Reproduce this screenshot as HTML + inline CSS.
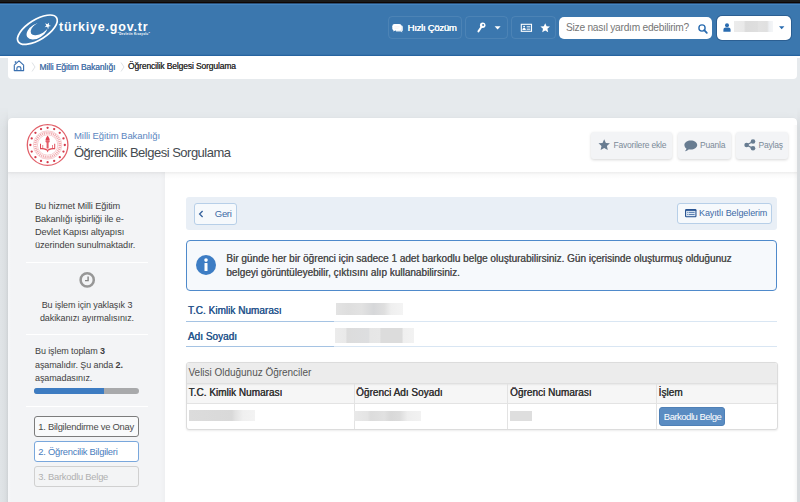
<!DOCTYPE html>
<html><head><meta charset="utf-8">
<style>
*{margin:0;padding:0;box-sizing:border-box}
html,body{width:800px;height:502px;overflow:hidden;background:#e6eaed;font-family:"Liberation Sans",sans-serif;position:relative}
.a{position:absolute}
.t{position:absolute;white-space:nowrap;line-height:1}
.sb{text-shadow:0.25px 0 0 currentColor}
svg{position:absolute;overflow:visible}
</style></head><body>
<!-- top dark bar -->
<div class="a" style="left:0;top:0;width:800px;height:2px;background:#1a1b1b"></div>
<div class="a" style="left:0;top:2px;width:800px;height:1px;background:#0e0604"></div>
<!-- header -->
<div class="a" style="left:0;top:3px;width:800px;height:53px;background:#3b77ae"></div>
<div class="a" style="left:0;top:3px;width:800px;height:1px;background:#2b4f74"></div>
<div class="a" style="left:0;top:4px;width:800px;height:1px;background:#4484c1"></div>
<div class="a" style="left:0;top:54px;width:800px;height:1px;background:#3672aa"></div>
<div class="a" style="left:0;top:55px;width:800px;height:1px;background:#2764a0"></div>
<div class="a" style="left:0;top:56px;width:800px;height:2px;background:#fff"></div>


<!-- logo -->
<svg style="left:0;top:0" width="160" height="56" viewBox="0 0 160 56">
  <defs>
    <mask id="cres" maskUnits="userSpaceOnUse" x="-50" y="-50" width="100" height="100">
      <rect x="-50" y="-50" width="100" height="100" fill="#fff"/>
      <ellipse cx="4.2" cy="-1" rx="10.6" ry="5.6" fill="#000"/>
    </mask>
  </defs>
  <ellipse cx="37.4" cy="29.7" rx="22.6" ry="10" transform="rotate(-32 37.4 29.7)" fill="none" stroke="#fff" stroke-width="1.7"/>
  <g transform="translate(37 31) rotate(-32)">
    <ellipse cx="0" cy="0" rx="11.5" ry="7" fill="#fff" mask="url(#cres)"/>
  </g>
  <polygon points="47.8,21.6 48.8,24.2 51.6,24.2 49.3,25.9 50.2,28.6 47.8,27 45.4,28.6 46.3,25.9 44,24.2 46.8,24.2" fill="#fff" transform="translate(47.8 25.3) scale(0.85) rotate(25) translate(-47.8 -25)"/>
</svg>
<div class="t" style="left:59px;top:21.4px;font-size:12.5px;font-weight:700;color:#fff;letter-spacing:0.8px">türkiye.gov.tr</div>
<div class="t" style="left:117.5px;top:33.4px;font-size:3px;font-weight:700;color:#fff;letter-spacing:0.25px">"Devletin Kısayolu"</div>

<!-- Hizli cozum button -->
<div class="a" style="left:387.5px;top:15.5px;width:74.5px;height:23.5px;border:1px solid rgba(255,255,255,0.09);border-radius:4px"></div>
<svg style="left:392px;top:23px" width="12" height="10" viewBox="0 0 12 10">
  <path d="M4 2.6 H9.4 C10.3 2.6 10.9 3.2 10.9 4.1 V6.9 C10.9 7.7 10.4 8.2 9.8 8.3 L10.4 9.5 L8.6 8.4 H4 Z" fill="#fff" opacity="0.85"/>
  <rect x="0.3" y="1" width="9.2" height="6.4" rx="2.2" fill="#fff"/>
  <path d="M1.6 6.8 L1.3 8.6 L3.6 7.2 Z" fill="#fff"/>
  <rect x="2.4" y="3.6" width="5.2" height="0.6" fill="#e6d9d9" opacity="0.6"/>
  <rect x="2.4" y="5.1" width="4" height="0.5" fill="#e6e6d9" opacity="0.5"/>
</svg>
<div class="t" style="left:407.5px;top:22.6px;font-size:9.6px;font-weight:400;color:#fff;letter-spacing:-0.3px;text-shadow:0.35px 0 0 #fff">Hızlı Çözüm</div>

<!-- key button -->
<div class="a" style="left:465px;top:16px;width:42.5px;height:23px;border:1px solid rgba(255,255,255,0.09);border-radius:4px"></div>
<svg style="left:472px;top:19px" width="16" height="16" viewBox="472 19 16 16">
  <path d="M481.2 27.2 L478.4 31.4" stroke="#fff" stroke-width="1.9" stroke-linecap="round"/>
  <circle cx="482.7" cy="25.3" r="2.75" fill="#fff"/>
  <circle cx="483.1" cy="25" r="0.95" fill="#3b77ae"/>
</svg>
<svg style="left:494px;top:25.5px" width="8" height="4" viewBox="0 0 8 4"><path d="M0.6 0.3 H6.6 L3.6 3.5 Z" fill="#fff"/></svg>

<!-- id card / star button -->
<div class="a" style="left:511px;top:16px;width:45px;height:23px;border:1px solid rgba(255,255,255,0.09);border-radius:4px"></div>
<svg style="left:516px;top:19px" width="20" height="16" viewBox="516 19 20 16">
  <rect x="521.3" y="24.3" width="10.2" height="7" fill="none" stroke="#fff" stroke-width="1.1"/>
  <circle cx="524.1" cy="26.6" r="0.95" fill="#fff"/>
  <path d="M522.4 29.9 C522.4 28.6 523.1 28.1 524.1 28.1 C525.1 28.1 525.8 28.6 525.8 29.9 Z" fill="#fff"/>
  <rect x="526.7" y="26.1" width="3.6" height="0.8" fill="#fff" opacity="0.85"/>
  <rect x="526.7" y="27.6" width="3.6" height="0.8" fill="#fff" opacity="0.85"/>
  <rect x="526.7" y="29.1" width="3.6" height="0.8" fill="#fff" opacity="0.85"/>
</svg>
<svg style="left:540px;top:23px" width="11" height="10" viewBox="0 0 11 10">
  <polygon points="5.2,0.2 6.6,3.3 10,3.6 7.4,5.8 8.2,9.3 5.2,7.4 2.2,9.3 3,5.8 0.4,3.6 3.8,3.3" fill="#fff"/>
</svg>

<!-- search -->
<div class="a" style="left:558.5px;top:16.5px;width:153.5px;height:22.5px;background:#fff;border-radius:5px"></div>
<div class="t" style="left:566px;top:22.5px;font-size:10.2px;color:#767676;letter-spacing:-0.25px">Size nasıl yardım edebilirim?</div>
<svg style="left:697.5px;top:23.5px" width="10" height="10" viewBox="0 0 10 10">
  <circle cx="4" cy="4" r="3.1" fill="none" stroke="#2a6cb0" stroke-width="1.4"/>
  <path d="M6.2 6.2 L8.8 8.8" stroke="#2a6cb0" stroke-width="1.8" stroke-linecap="round"/>
</svg>

<!-- user dropdown -->
<div class="a" style="left:715.5px;top:14.5px;width:76.5px;height:26px;background:#2c5f92;border-radius:6px"></div>
<div class="a" style="left:716.5px;top:15.5px;width:74.5px;height:24px;background:#fff;border-radius:5px"></div>
<svg style="left:722.5px;top:22.5px" width="8" height="9" viewBox="0 0 8 9">
  <circle cx="4" cy="2.2" r="2" fill="#2a6cb0"/>
  <path d="M0.4 8.8 L0.4 6.8 C0.4 5.3 1.6 4.5 2.6 4.5 L5.4 4.5 C6.4 4.5 7.6 5.3 7.6 6.8 L7.6 8.8 Z" fill="#2a6cb0"/>
</svg>
<div class="a" style="left:734px;top:21px;width:39px;height:11px;background:linear-gradient(90deg,#ececec 0%,#e9e9e9 25%,#dcdcdc 30%,#dedede 60%,#e2e2e2 62%,#e0e0e0 85%,#eef0f3 90%,#f4f6f8 100%)"></div>
<svg style="left:778.5px;top:25.5px" width="6" height="4" viewBox="0 0 6 4"><path d="M0 0.2 H5.4 L2.7 3.3 Z" fill="#2a6cb0"/></svg>

<!-- breadcrumb card -->
<div class="a" style="left:8px;top:56px;width:789px;height:23px;background:#fff;border-radius:0 0 4px 4px"></div>


<!-- breadcrumb content -->
<svg style="left:13px;top:59px" width="13" height="13" viewBox="13 59 13 13">
  <path d="M14 65.4 L19 60.8 L23.9 65.4 M14.3 65 V70.6 H23.6 V65 M16.9 70.6 V68 C16.9 66.2 20.9 66.2 20.9 68 V70.6" fill="none" stroke="#3a70b0" stroke-width="1.15" stroke-linejoin="round"/>
  <path d="M14.8 61.3 V63.6 L16.4 62.2 V61.3 Z" fill="#3a70b0"/>
</svg>
<svg style="left:31px;top:62px" width="6" height="11" viewBox="0 0 6 11"><path d="M1 0.5 L4 5 L1 9.5" fill="none" stroke="#d5d9de" stroke-width="0.8"/></svg>
<div class="t" style="left:39.5px;top:62.5px;font-size:8.5px;color:#4b76ab;letter-spacing:-0.12px;text-shadow:0.1px 0 0 #4b76ab">Milli Eğitim Bakanlığı</div>
<svg style="left:120px;top:62px" width="6" height="11" viewBox="0 0 6 11"><path d="M1 0.5 L4 5 L1 9.5" fill="none" stroke="#d5d9de" stroke-width="0.8"/></svg>
<div class="t" style="left:128px;top:62.3px;font-size:8.5px;color:#333;letter-spacing:-0.13px;text-shadow:0.1px 0 0 #333">Öğrencilik Belgesi Sorgulama</div>

<!-- main card -->
<div class="a" style="left:0;top:108px;width:8px;height:394px;background:linear-gradient(90deg,#e0e4e7 0%,#dde1e4 60%,#d5d9dc 100%);-webkit-mask-image:linear-gradient(transparent,#000 22px)"></div>
<div class="a" style="left:797px;top:108px;width:3px;height:394px;background:linear-gradient(90deg,#e2e5e8 0%,#dadee1 40%,#d9dde0 100%);-webkit-mask-image:linear-gradient(transparent,#000 22px)"></div>
<div class="a" style="left:8px;top:118px;width:789px;height:400px;background:#fff;border-radius:4px;box-shadow:0 0 1px rgba(0,0,0,0.1),0 0 9px rgba(0,0,0,0.04)"></div>

<!-- emblem -->
<svg style="left:0;top:0" width="100" height="200" viewBox="0 0 100 200">
  <circle cx="47.6" cy="145" r="20.3" fill="none" stroke="#e2626b" stroke-width="1.3"/>
  <circle cx="47.60" cy="127.80" r="1.15" fill="#d4394a"/><circle cx="54.18" cy="129.11" r="1.15" fill="#d4394a"/><circle cx="59.76" cy="132.84" r="1.15" fill="#d4394a"/><circle cx="63.49" cy="138.42" r="1.15" fill="#d4394a"/><circle cx="64.80" cy="145.00" r="1.15" fill="#d4394a"/><circle cx="63.49" cy="151.58" r="1.15" fill="#d4394a"/><circle cx="59.76" cy="157.16" r="1.15" fill="#d4394a"/><circle cx="54.18" cy="160.89" r="1.15" fill="#d4394a"/><circle cx="47.60" cy="162.20" r="1.15" fill="#d4394a"/><circle cx="41.02" cy="160.89" r="1.15" fill="#d4394a"/><circle cx="35.44" cy="157.16" r="1.15" fill="#d4394a"/><circle cx="31.71" cy="151.58" r="1.15" fill="#d4394a"/><circle cx="30.40" cy="145.00" r="1.15" fill="#d4394a"/><circle cx="31.71" cy="138.42" r="1.15" fill="#d4394a"/><circle cx="35.44" cy="132.84" r="1.15" fill="#d4394a"/><circle cx="41.02" cy="129.11" r="1.15" fill="#d4394a"/>
  <circle cx="47.6" cy="145" r="12.2" fill="none" stroke="#f0a9ae" stroke-width="2.6" stroke-dasharray="1.1 0.8"/>
  <circle cx="47.6" cy="145" r="14.2" fill="none" stroke="#eea0a5" stroke-width="0.5"/>
  <circle cx="47.6" cy="145" r="10.2" fill="none" stroke="#eea0a5" stroke-width="0.5"/>
  <path d="M47.6 135.6 C46.2 137.6 45.3 139.2 45.6 140.8 L49.6 140.8 C49.9 139.2 49 137.6 47.6 135.6 Z" fill="#e0404f"/>
  <path d="M45.3 141 L49.9 141 L49.2 142.6 L48.6 142.6 L48.6 148.6 L46.6 148.6 L46.6 142.6 L46 142.6 Z" fill="#e35d68"/>
  <path d="M40 143.8 L40 149.2 C42.5 149.2 45.5 149.6 47.6 151 C49.7 149.6 52.7 149.2 55.2 149.2 L55.2 143.8 L54.2 143.8 L54.2 148.1 C52 148.1 49.6 148.5 47.6 149.7 C45.6 148.5 43.2 148.1 41 148.1 L41 143.8 Z" fill="#e04a57"/>
  <rect x="42.3" y="145" width="0.9" height="3" fill="#e77a83"/>
  <rect x="52" y="145" width="0.9" height="3" fill="#e77a83"/>
  <rect x="47.1" y="150.5" width="1" height="1.6" fill="#e25863"/>
</svg>
<div class="t" style="left:74px;top:131.3px;font-size:9.5px;color:#5b86c0;letter-spacing:-0.07px">Milli Eğitim Bakanlığı</div>
<div class="t" style="left:74px;top:145.5px;font-size:13px;color:#444a50;letter-spacing:-0.5px">Öğrencilik Belgesi Sorgulama</div>

<!-- header action buttons -->
<div class="a" style="left:590.5px;top:131.5px;width:81.5px;height:27px;background:#f3f4f6;border-radius:3px;box-shadow:0 1px 3px rgba(0,0,0,0.16)"></div>
<svg style="left:598px;top:139px" width="13" height="12" viewBox="0 0 13 12">
  <polygon points="6.2,0.3 7.9,4 11.9,4.3 8.9,7 9.8,11 6.2,8.9 2.6,11 3.5,7 0.5,4.3 4.5,4" fill="#687c91"/>
</svg>
<div class="t" style="left:613.5px;top:140.5px;font-size:8.5px;color:#7b8a98;letter-spacing:-0.2px">Favorilere ekle</div>

<div class="a" style="left:677.5px;top:131.5px;width:53px;height:27px;background:#f3f4f6;border-radius:3px;box-shadow:0 1px 3px rgba(0,0,0,0.16)"></div>
<svg style="left:684px;top:140px" width="14" height="12" viewBox="0 0 14 12">
  <path d="M6.8 0.5 C10.3 0.5 13.2 2.5 13.2 5 C13.2 7.5 10.3 9.5 6.8 9.5 C6.1 9.5 5.5 9.4 4.9 9.3 C3.9 10.3 2.5 11 0.9 11.3 C1.7 10.6 2.3 9.6 2.4 8.6 C1.2 7.8 0.4 6.5 0.4 5 C0.4 2.5 3.3 0.5 6.8 0.5 Z" fill="#687c91"/>
</svg>
<div class="t" style="left:700px;top:140.5px;font-size:8.5px;color:#7b8a98;letter-spacing:-0.2px">Puanla</div>

<div class="a" style="left:736px;top:131.5px;width:52px;height:27px;background:#f3f4f6;border-radius:3px;box-shadow:0 1px 3px rgba(0,0,0,0.16)"></div>
<svg style="left:744px;top:139px" width="12" height="12" viewBox="0 0 12 12">
  <circle cx="2.6" cy="6" r="2.3" fill="#687c91"/>
  <circle cx="9" cy="2.5" r="2.3" fill="#687c91"/>
  <circle cx="9" cy="9.3" r="2.3" fill="#687c91"/>
  <path d="M2.6 6 L9 2.5 M2.6 6 L9 9.3" stroke="#687c91" stroke-width="1.3"/>
</svg>
<div class="t" style="left:758.5px;top:140.5px;font-size:8.5px;color:#7b8a98;letter-spacing:-0.2px">Paylaş</div>

<!-- sidebar -->

<div class="a" style="left:8px;top:172px;width:157px;height:340px;background:#f3f4f6"></div>
<div class="a" style="left:8px;top:172px;width:3px;height:330px;background:linear-gradient(90deg,#f7f8fa,#f3f4f6)"></div>
<div class="a" style="left:160px;top:172px;width:5px;height:330px;background:linear-gradient(90deg,rgba(0,0,0,0),rgba(0,0,0,0.018))"></div>
<div class="a" style="left:8px;top:171.5px;width:789px;height:7px;background:linear-gradient(rgba(0,0,0,0.07),rgba(0,0,0,0.02) 40%,rgba(0,0,0,0))"></div>


<!-- sidebar content -->
<div class="a" style="left:35px;top:199.9px;width:125px;font-size:9.2px;line-height:13px;letter-spacing:-0.1px;color:#3f3f3f;white-space:nowrap">Bu hizmet Milli Eğitim<br>Bakanlığı işbirliği ile e-<br>Devlet Kapısı altyapısı<br>üzerinden sunulmaktadır.</div>
<div class="a" style="left:26px;top:262px;width:122px;height:1px;background:#fff"></div>
<svg style="left:78px;top:271px" width="18" height="18" viewBox="0 0 18 18">
  <circle cx="9.2" cy="8.9" r="6.6" fill="none" stroke="#979797" stroke-width="2.5"/>
  <path d="M10.1 5.4 V9.6 H7" fill="none" stroke="#858585" stroke-width="1.4"/>
</svg>
<div class="a" style="left:26px;top:298.6px;width:122px;font-size:9px;line-height:13px;color:#3f3f3f;white-space:nowrap;text-align:center;letter-spacing:-0.1px">Bu işlem için yaklaşık 3<br>dakikanızı ayırmalısınız.</div>
<div class="a" style="left:26px;top:334px;width:122px;height:1px;background:#fff"></div>
<div class="a" style="left:35px;top:345px;width:125px;font-size:9px;line-height:13.5px;color:#3f3f3f;white-space:nowrap;letter-spacing:-0.1px">Bu işlem toplam <b>3</b><br>aşamalıdır. Şu anda <b>2.</b><br>aşamadasınız.</div>
<div class="a" style="left:34.3px;top:387.7px;width:104.7px;height:6px;background:#a8a9ab;border-radius:3px;overflow:hidden"><div style="width:70px;height:6px;background:#3d7cc2"></div></div>
<div class="a" style="left:26px;top:406px;width:122px;height:1px;background:#fff"></div>
<div class="a" style="left:34px;top:415.8px;width:105px;height:21px;border:1.5px solid #7c7c7c;border-radius:3px;background:#f9fafb"></div>
<div class="t" style="left:38.3px;top:421.9px;font-size:9.4px;color:#4a4a4a;letter-spacing:-0.25px">1. Bilgilendirme ve Onay</div>
<div class="a" style="left:34px;top:441px;width:105px;height:21px;border:1.5px solid #79a7dc;border-radius:3px;background:#fff"></div>
<div class="t" style="left:38.3px;top:447.1px;font-size:9.4px;color:#4a7dbd;letter-spacing:-0.25px">2. Öğrencilik Bilgileri</div>
<div class="a" style="left:34px;top:466.2px;width:105px;height:21px;border:1.5px solid #d0d0d0;border-radius:3px;background:#f3f4f5"></div>
<div class="t" style="left:38.3px;top:472.3px;font-size:9.4px;color:#b0b0b0;letter-spacing:-0.25px">3. Barkodlu Belge</div>

<!-- content -->
<div class="a" style="left:186px;top:197.3px;width:591.3px;height:32.5px;background:#e9eff6;border-radius:3px"></div>
<div class="a" style="left:193.6px;top:202.9px;width:43.2px;height:21.7px;border:1px solid #b7cfe8;border-radius:3px;background:#f6f9fc"></div>
<svg style="left:198px;top:210px" width="7" height="8" viewBox="0 0 7 8"><path d="M4.6 1 L1.6 4 L4.6 7" fill="none" stroke="#35619c" stroke-width="1.3"/></svg>
<div class="t" style="left:214.8px;top:208.7px;font-size:9.5px;color:#3d6aa5;letter-spacing:-0.3px">Geri</div>
<div class="a" style="left:677.2px;top:203.4px;width:94.8px;height:21px;border:1px solid #b7cfe8;border-radius:3px;background:#f6f9fc"></div>
<svg style="left:682px;top:205px" width="18" height="16" viewBox="682 205 18 16">
  <rect x="685" y="209" width="11.5" height="8.3" rx="1.2" fill="#2a5593"/>
  <rect x="686.1" y="210.9" width="9.3" height="5.3" fill="#dce7f3"/>
  <rect x="687" y="211.9" width="1" height="1" fill="#7d9cc4"/>
  <rect x="688.6" y="211.9" width="6" height="1" fill="#5b80b3"/>
  <rect x="687" y="214" width="1" height="1" fill="#7d9cc4"/>
  <rect x="688.6" y="214" width="6" height="1" fill="#5b80b3"/>
</svg>
<div class="t" style="left:699px;top:208.7px;font-size:9px;color:#3c6aa6;letter-spacing:-0.1px">Kayıtlı Belgelerim</div>

<div class="a" style="left:185.6px;top:240px;width:591.8px;height:51.3px;border:1.5px solid #4f8acb;border-radius:4px;background:#f6f9fc"></div>
<svg style="left:195px;top:254px" width="22" height="22" viewBox="0 0 22 22">
  <circle cx="11" cy="11" r="10" fill="#3d7dc4"/>
  <circle cx="11" cy="6.1" r="1.8" fill="#fff"/>
  <rect x="9.5" y="8.9" width="3" height="8.2" rx="0.4" fill="#fff"/>
</svg>
<div class="a" style="left:226.3px;top:252px;font-size:10px;line-height:14px;color:#505050;white-space:nowrap;text-shadow:0.2px 0 0 #505050">Bir günde her bir öğrenci için sadece 1 adet barkodlu belge oluşturabilirsiniz. Gün içerisinde oluşturmuş olduğunuz<br>belgeyi görüntüleyebilir, çıktısını alıp kullanabilirsiniz.</div>

<div class="t" style="left:187.8px;top:306.3px;font-size:10px;color:#27558d;letter-spacing:0.02px;text-shadow:0.35px 0 0 #27558d">T.C. Kimlik Numarası</div>
<div class="a" style="left:335.8px;top:303.1px;width:67.5px;height:11.7px;background:linear-gradient(90deg,#e3e3e3 0%,#dedede 18%,#e2e2e2 38%,#d6d7d9 56%,#dfdfdf 72%,#efefef 82%,#f4f4f4 100%)"></div>
<div class="a" style="left:186px;top:321px;width:148px;height:1px;background:#a5c3e3"></div>
<div class="a" style="left:334px;top:321px;width:443px;height:1px;background:#d9e6f3"></div>
<div class="t" style="left:187.8px;top:332px;font-size:10px;color:#27558d;letter-spacing:0.02px;text-shadow:0.35px 0 0 #27558d">Adı Soyadı</div>
<div class="a" style="left:335px;top:328.3px;width:78.8px;height:14.7px;background:linear-gradient(90deg,#ececec 0%,#e9e9e9 14%,#dcdcdc 15%,#dddee0 43%,#e6e6e6 44%,#e7e7e7 57%,#dcdcdc 58%,#dcdcdc 85%,#efefef 86%,#f2f2f2 100%)"></div>
<div class="a" style="left:186px;top:346px;width:148px;height:1px;background:#a5c3e3"></div>
<div class="a" style="left:334px;top:346px;width:443px;height:1px;background:#d9e6f3"></div>

<!-- table -->
<div class="a" style="left:185.5px;top:362.2px;width:592px;height:67.8px;border:1px solid #dcdcdc;border-radius:3px;background:#fff;box-shadow:0 1px 2px rgba(0,0,0,0.08);overflow:hidden">
  <div class="a" style="left:0;top:0;width:590px;height:20.5px;background:#ececec;border-bottom:1px solid #e0e0e0"></div>
  <div class="a" style="left:0;top:20.5px;width:590px;height:20.5px;background:#f6f6f6;border-bottom:1px solid #e3e3e3;box-shadow:inset 0 1px 2px rgba(0,0,0,0.06)"></div>
  <div class="a" style="left:167px;top:20.5px;width:1px;height:47px;background:#e3e3e3"></div>
  <div class="a" style="left:320px;top:20.5px;width:1px;height:47px;background:#e3e3e3"></div>
  <div class="a" style="left:469px;top:20.5px;width:1px;height:47px;background:#e3e3e3"></div>
</div>
<div class="t" style="left:188.5px;top:368.1px;font-size:10px;color:#555;letter-spacing:-0.02px">Velisi Olduğunuz Öğrenciler</div>
<div class="t" style="left:188.5px;top:387.6px;font-size:10px;color:#333;letter-spacing:0.02px;text-shadow:0.35px 0 0 #333">T.C. Kimlik Numarası</div>
<div class="t" style="left:356px;top:387.6px;font-size:10px;color:#333;letter-spacing:0.02px;text-shadow:0.35px 0 0 #333">Öğrenci Adı Soyadı</div>
<div class="t" style="left:510px;top:387.6px;font-size:10px;color:#333;letter-spacing:0.02px;text-shadow:0.35px 0 0 #333">Öğrenci Numarası</div>
<div class="t" style="left:658.5px;top:387.6px;font-size:10px;color:#333;letter-spacing:0.02px;text-shadow:0.35px 0 0 #333">İşlem</div>
<div class="a" style="left:188.8px;top:410px;width:66.2px;height:10.5px;background:linear-gradient(90deg,#dcdcdc 0%,#d9d9d9 65%,#e2e2e2 70%,#f0f0f0 82%,#f3f3f3 100%)"></div>
<div class="a" style="left:353.5px;top:410.5px;width:67px;height:10.5px;background:linear-gradient(90deg,#e9e9e9 0%,#e4e4e4 20%,#dcdcdc 25%,#e1e1e1 45%,#d8d8d8 55%,#dcdcdc 68%,#eeeeee 80%,#f2f2f2 100%)"></div>
<div class="a" style="left:510px;top:410.5px;width:22px;height:10.5px;background:#dedede"></div>
<div class="a" style="left:658.9px;top:407.2px;width:66.2px;height:19px;background:#5a8cc2;border:1px solid #4f80b6;border-radius:3px"></div>
<div class="t" style="left:663.8px;top:412.2px;font-size:9.5px;color:#fff;letter-spacing:-0.5px">Barkodlu Belge</div>

<div class="a" style="left:793px;top:125px;width:4px;height:377px;background:linear-gradient(90deg,rgba(0,0,0,0),rgba(0,0,0,0.035))"></div>
</body></html>
